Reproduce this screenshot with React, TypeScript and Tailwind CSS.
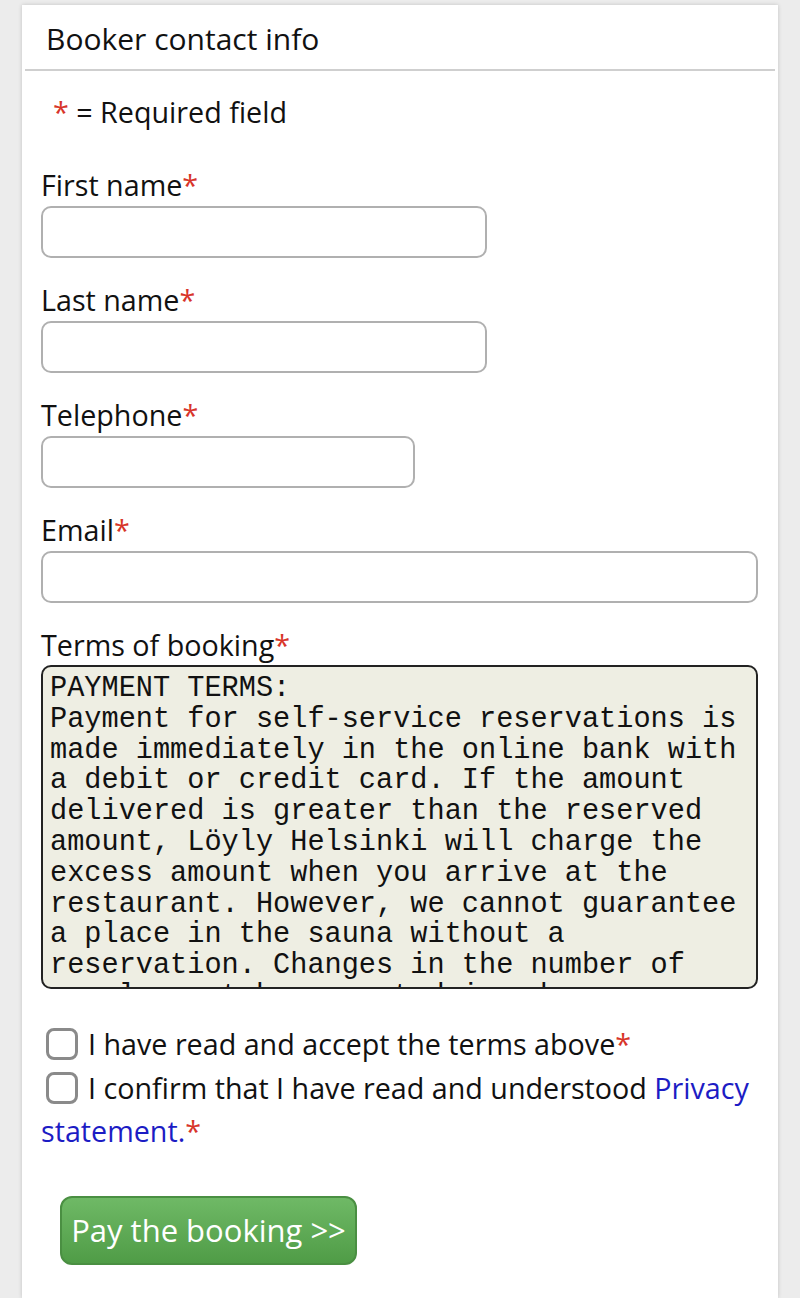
import React from "react";

const terms = `PAYMENT TERMS:
Payment for self-service reservations is made immediately in the online bank with a debit or credit card. If the amount delivered is greater than the reserved amount, Löyly Helsinki will charge the excess amount when you arrive at the restaurant. However, we cannot guarantee a place in the sauna without a reservation. Changes in the number of people must be reported in advance.`;

function Star() {
  return <span className="text-[#d8352a]">*</span>;
}

function Field({ label, widthClass }: { label: string; widthClass: string }) {
  return (
    <div className="flex flex-col">
      <label className="text-[28.7px] leading-[40px] text-[#111]">
        {label}
        <Star />
      </label>
      <input
        type="text"
        className={`mt-[1px] h-[52px] ${widthClass} rounded-[10px] border-2 border-[#b0b0b0] bg-white outline-none`}
      />
    </div>
  );
}

export default function App() {
  return (
    <div
      className="min-h-[1298px] bg-[#ececec] px-[22px] pt-[5px]"
      style={{ fontFamily: '"Open Sans", "Noto Sans", sans-serif' }}
    >
      <div className="min-h-[1293px] bg-white shadow-[0_0_4px_rgba(0,0,0,0.18)]">
        <div className="mx-[3px] border-b-2 border-[#cfcfcf] pl-[21px] pt-[15px] pb-[11px]">
          <h2 className="text-[30px] leading-[38px] text-[#111]">Booker contact info</h2>
        </div>
        <div className="px-[19px]">
          <p className="mt-[22px] pl-[12px] text-[28.7px] leading-[38px] text-[#111]">
            <span className="text-[#d8352a]">*</span> = Required field
          </p>
          <div className="mt-[34px] flex flex-col gap-[22px]">
            <Field label="First name" widthClass="w-[446px]" />
            <Field label="Last name" widthClass="w-[446px]" />
            <Field label="Telephone" widthClass="w-[374px]" />
            <Field label="Email" widthClass="w-[717px]" />
            <div className="flex flex-col">
              <label className="text-[28.7px] leading-[40px] text-[#111]">
                Terms of booking
                <Star />
              </label>
              <div className="h-[324px] w-[717px] overflow-hidden rounded-[10px] border-2 border-[#222] bg-[#eeeee3] pl-[7px] pr-[10px] pt-[7px]">
                <div
                  className="whitespace-pre-wrap text-[28.6px] leading-[30.8px] text-[#111]"
                  style={{ fontFamily: '"Liberation Mono", "Courier New", monospace' }}
                >
                  {terms}
                </div>
              </div>
            </div>
          </div>
          <div className="mt-[33px] text-[28.7px] leading-[43px] text-[#111]">
            <label className="block">
              <span className="relative top-[5px] mx-[5px] inline-block h-[32px] w-[32px] rounded-[8px] border-[3px] border-[#8a8a8a] bg-white align-baseline" />
              <span className="ml-[5px]">I have read and accept the terms above</span>
              <Star />
            </label>
            <label className="mt-[1px] block">
              <span className="relative top-[5px] mx-[5px] inline-block h-[32px] w-[32px] rounded-[8px] border-[3px] border-[#8a8a8a] bg-white align-baseline" />
              <span className="ml-[5px]">I confirm that I have read and understood </span>
              <a className="text-[#1c1cc4]">Privacy statement.</a>
              <Star />
            </label>
          </div>
          <button className="ml-[19px] mt-[44px] h-[69px] w-[297px] rounded-[12px] border-2 border-[#4a8f42] bg-gradient-to-b from-[#6fb966] to-[#4f9c46] text-[31px] text-white">
            Pay the booking &gt;&gt;
          </button>
        </div>
      </div>
    </div>
  );
}
